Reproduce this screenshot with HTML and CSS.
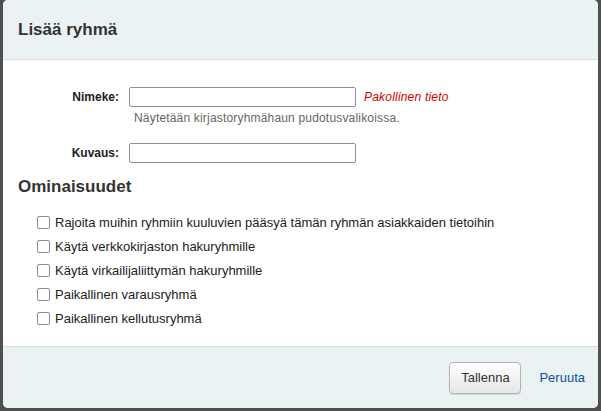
FILE: index.html
```html
<!DOCTYPE html>
<html lang="fi">
<head>
<meta charset="utf-8">
<title>Lisää ryhmä</title>
<link rel="stylesheet" href="styles.css">
</head>
<body>
<div class="dialog">
  <div class="header"><h1 class="title">Lisää ryhmä</h1></div>
  <div class="content">
    <div class="field">
      <label class="label" for="nimeke">Nimeke:</label>
      <div class="control">
        <div class="inline"><input id="nimeke" class="text" type="text"><span class="required">Pakollinen tieto</span></div>
        <div class="hint">Näytetään kirjastoryhmähaun pudotusvalikoissa.</div>
      </div>
    </div>
    <div class="field field-2">
      <label class="label" for="kuvaus">Kuvaus:</label>
      <div class="control">
        <div class="inline"><input id="kuvaus" class="text" type="text"></div>
      </div>
    </div>
    <h2 class="section">Ominaisuudet</h2>
    <ul class="checks">
      <li><label class="check"><input type="checkbox" class="box"><span>Rajoita muihin ryhmiin kuuluvien pääsyä tämän ryhmän asiakkaiden tietoihin</span></label></li>
      <li><label class="check"><input type="checkbox" class="box"><span>Käytä verkkokirjaston hakuryhmille</span></label></li>
      <li><label class="check"><input type="checkbox" class="box"><span>Käytä virkailijaliittymän hakuryhmille</span></label></li>
      <li><label class="check"><input type="checkbox" class="box"><span>Paikallinen varausryhmä</span></label></li>
      <li><label class="check"><input type="checkbox" class="box"><span>Paikallinen kellutusryhmä</span></label></li>
    </ul>
  </div>
  <div class="footer">
    <button class="btn" type="button">Tallenna</button>
    <a class="cancel" href="#">Peruuta</a>
  </div>
</div>
</body>
</html>
```

FILE: styles.css
```css
html, body {
  margin: 0;
  padding: 0;
}
body {
  background: #505050;
  width: 601px;
  height: 411px;
  overflow: hidden;
  font-family: "Liberation Sans", Arial, sans-serif;
  color: #222;
}
.dialog {
  margin-left: 3px;
  width: 595px;
  height: 408px;
  background: #fff;
  border-radius: 5px;
  overflow: hidden;
  display: flex;
  flex-direction: column;
}
.header {
  height: 59px;
  flex: none;
  background: #eaf2f4;
  border-bottom: 1px solid #dcdfe0;
  display: flex;
  align-items: center;
  padding: 0 15px;
}
.title {
  margin: 0;
  font-size: 17px;
  font-weight: bold;
  color: #333;
  line-height: 20px;
}
.content {
  flex: 1;
  padding-top: 27px;
}
.field {
  display: grid;
  grid-template-columns: 116px 1fr;
  column-gap: 10px;
}
.field-2 {
  margin-top: 17px;
}
.label {
  text-align: right;
  font-size: 12px;
  font-weight: bold;
  line-height: 20px;
  color: #222;
}
.inline {
  display: flex;
  align-items: center;
  height: 20px;
}
.text {
  box-sizing: border-box;
  width: 227px;
  height: 20px;
  margin: 0;
  border: 1px solid #8f8f9d;
  border-radius: 2px;
  background: #fff;
  padding: 0 3px;
  font: 12px "Liberation Sans", Arial, sans-serif;
}
.required {
  margin-left: 8px;
  color: #d00000;
  font-style: italic;
  font-size: 12px;
  letter-spacing: 0.2px;
}
.hint {
  margin-top: 4px;
  padding-left: 5px;
  font-size: 12px;
  letter-spacing: 0.18px;
  line-height: 15px;
  color: #666;
}
.section {
  margin: 14px 0 0 15px;
  font-size: 17px;
  font-weight: bold;
  line-height: 20px;
  color: #333;
}
.checks {
  list-style: none;
  margin: 13px 0 0 0;
  padding: 0 0 0 34px;
}
.checks li {
  height: 24px;
}
.check {
  display: flex;
  align-items: center;
  height: 24px;
  font-size: 13px;
  color: #222;
}
.box {
  appearance: none;
  -webkit-appearance: none;
  box-sizing: border-box;
  width: 13px;
  height: 13px;
  margin: 0 5px 0 0;
  border: 1px solid #8a8a96;
  border-radius: 2px;
  background: #fff;
  flex: none;
}
.footer {
  height: 61px;
  flex: none;
  background: #eaf2f4;
  border-top: 1px solid #dcdfe0;
  display: flex;
  align-items: center;
  justify-content: flex-end;
  padding-right: 13px;
  gap: 18px;
}
.btn {
  height: 32px;
  padding: 0 10px;
  min-width: 72px;
  border: 1px solid #b3b3b3;
  border-radius: 4px;
  background: linear-gradient(#ffffff, #e6e6e6);
  box-shadow: 0 1px 1px rgba(0,0,0,0.1);
  font: 13px "Liberation Sans", Arial, sans-serif;
  color: #333;
}
.cancel {
  font-size: 13px;
  color: #0b50a0;
  text-decoration: none;
}
```
